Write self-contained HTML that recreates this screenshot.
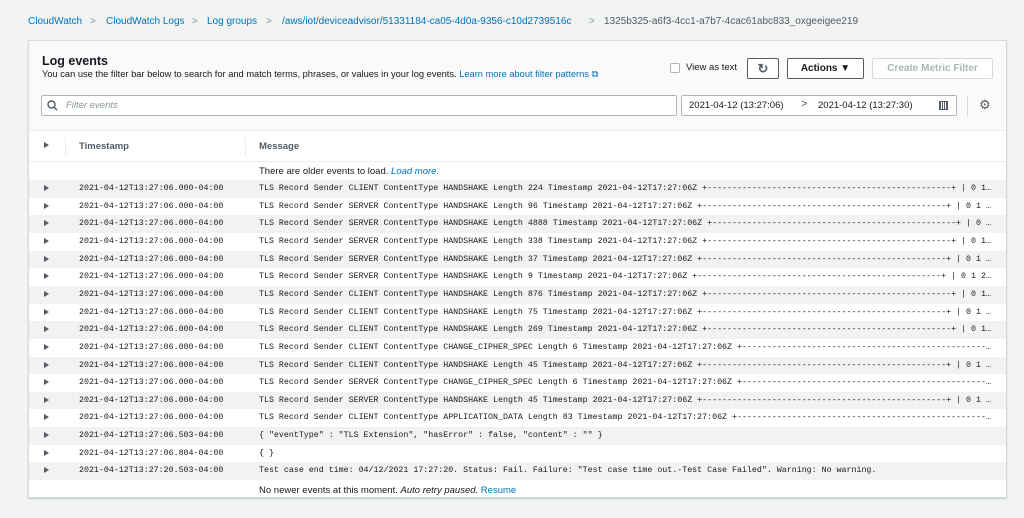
<!DOCTYPE html>
<html><head><meta charset="utf-8"><style>
*{margin:0;padding:0;box-sizing:border-box}
body{width:1024px;height:518px;background:#f2f3f3;font-family:"Liberation Sans",sans-serif;color:#16191f;position:relative;overflow:hidden}
.a{position:absolute;white-space:nowrap}
.bc{top:16px;font-size:10px;color:#0073bb}
.sep{color:#879596}
.panel{left:28px;top:40px;width:979px;height:458px;background:#fff;border:1px solid #d5dbdb;box-shadow:0 1px 1px rgba(0,28,36,.2)}
.btn{border:1px solid #545b64;border-radius:2px;background:#fff;font-size:10px;font-weight:bold;text-align:center;color:#545b64}
.row{position:absolute;left:29px;width:977px;height:17.65px}
.row.g{background:#f2f2f2}
.mono{font-family:"Liberation Mono",monospace;font-size:8.3px;color:#16191f;white-space:nowrap}
.tri{position:absolute;left:15px;top:5px;width:0;height:0;border-left:5px solid #545b64;border-top:3.5px solid transparent;border-bottom:3.5px solid transparent}
.ts{position:absolute;left:50px;top:4px}
.msg{position:absolute;left:230px;top:4px;width:734px;overflow:hidden;text-overflow:ellipsis}
</style></head><body>
<div class="a bc" style="left:28px">CloudWatch</div>
<div class="a bc sep" style="left:90px">&gt;</div>
<div class="a bc" style="left:106px">CloudWatch Logs</div>
<div class="a bc sep" style="left:192px">&gt;</div>
<div class="a bc" style="left:207px">Log groups</div>
<div class="a bc sep" style="left:266px">&gt;</div>
<div class="a bc" style="left:282px">/aws/iot/deviceadvisor/51331184-ca05-4d0a-9356-c10d2739516c</div>
<div class="a bc sep" style="left:589px">&gt;</div>
<div class="a bc" style="left:604px;color:#545b64">1325b325-a6f3-4cc1-a7b7-4cac61abc833_oxgeeigee219</div>
<div class="a panel"></div>
<div class="a" style="left:29px;top:41px;width:977px;height:89px;background:#fafafa"></div>
<div class="a" style="left:42px;top:54px;font-size:12.5px;font-weight:bold">Log events</div>
<div class="a" style="left:42px;top:69px;font-size:9.3px;color:#16191f">You can use the filter bar below to search for and match terms, phrases, or values in your log events. <span style="color:#0073bb">Learn more about filter patterns ⧉</span></div>
<div class="a" style="left:670px;top:63px;width:10px;height:10px;border:1px solid #aab7b8;border-radius:2px;background:#fff"></div>
<div class="a" style="left:686px;top:62px;font-size:9.5px">View as text</div>
<div class="a btn" style="left:747px;top:58px;width:32px;height:21px;font-size:13px;line-height:19px">↻</div>
<div class="a btn" style="left:787px;top:58px;width:77px;height:21px;line-height:19px;color:#16191f">Actions ▼</div>
<div class="a btn" style="left:872px;top:58px;width:121px;height:21px;line-height:19px;border-color:#d5dbdb;color:#aab7b8">Create Metric Filter</div>
<div class="a" style="left:41px;top:95px;width:636px;height:21px;border:1px solid #aab7b8;border-radius:2px;background:#fff"></div>
<svg class="a" style="left:47px;top:100px" width="11" height="11" viewBox="0 0 11 11"><circle cx="4.5" cy="4.5" r="3.5" fill="none" stroke="#545b64" stroke-width="1.4"/><path d="M7 7l3 3" stroke="#545b64" stroke-width="1.5"/></svg>
<div class="a" style="left:66px;top:100px;font-size:9.5px;font-style:italic;color:#879596">Filter events</div>
<div class="a" style="left:681px;top:95px;width:276px;height:21px;border:1px solid #aab7b8;border-radius:2px;background:#fff"></div>
<div class="a" style="left:689px;top:100px;font-size:9.5px">2021-04-12 (13:27:06)</div>
<div class="a" style="left:801px;top:98px;font-size:11px;color:#545b64">&gt;</div>
<div class="a" style="left:818px;top:100px;font-size:9.5px">2021-04-12 (13:27:30)</div>
<div class="a" style="left:939px;top:101px;width:9px;height:9px;border:1.5px solid #545b64;background:repeating-linear-gradient(90deg,#545b64 0 1px,#fff 1px 2px)"></div>
<div class="a" style="left:967px;top:96px;width:1px;height:20px;background:#d5dbdb"></div>
<div class="a" style="left:979px;top:97px;font-size:13px;color:#545b64">⚙</div>
<div class="a" style="left:29px;top:130px;width:977px;height:1px;background:#eaeded"></div>
<div class="a" style="left:29px;top:161px;width:977px;height:1px;background:#eaeded"></div>
<div class="tri" style="left:44px;top:142px"></div>
<div class="a" style="left:65px;top:138px;width:1px;height:18px;background:#eaeded"></div>
<div class="a" style="left:245px;top:138px;width:1px;height:18px;background:#eaeded"></div>
<div class="a" style="left:79px;top:141px;font-size:9.5px;font-weight:bold;color:#545b64">Timestamp</div>
<div class="a" style="left:259px;top:141px;font-size:9.5px;font-weight:bold;color:#545b64">Message</div>
<div class="a" style="left:259px;top:166px;font-size:9.5px">There are older events to load. <i style="color:#0073bb">Load more.</i></div>
<div class="row g" style="top:180.0px"><div class="tri"></div><div class="ts mono">2021-04-12T13:27:06.000-04:00</div><div class="msg mono">TLS Record Sender CLIENT ContentType HANDSHAKE Length 224 Timestamp 2021-04-12T17:27:06Z +-------------------------------------------------+ | 0 1 2 3 4 5 6 7 8 9</div></div>
<div class="row" style="top:197.65px"><div class="tri"></div><div class="ts mono">2021-04-12T13:27:06.000-04:00</div><div class="msg mono">TLS Record Sender SERVER ContentType HANDSHAKE Length 96 Timestamp 2021-04-12T17:27:06Z +-------------------------------------------------+ | 0 1 2 3 4 5 6 7 8 9</div></div>
<div class="row g" style="top:215.3px"><div class="tri"></div><div class="ts mono">2021-04-12T13:27:06.000-04:00</div><div class="msg mono">TLS Record Sender SERVER ContentType HANDSHAKE Length 4888 Timestamp 2021-04-12T17:27:06Z +-------------------------------------------------+ | 0 1 2 3 4 5 6 7 8 9</div></div>
<div class="row" style="top:232.95px"><div class="tri"></div><div class="ts mono">2021-04-12T13:27:06.000-04:00</div><div class="msg mono">TLS Record Sender SERVER ContentType HANDSHAKE Length 338 Timestamp 2021-04-12T17:27:06Z +-------------------------------------------------+ | 0 1 2 3 4 5 6 7 8 9</div></div>
<div class="row g" style="top:250.6px"><div class="tri"></div><div class="ts mono">2021-04-12T13:27:06.000-04:00</div><div class="msg mono">TLS Record Sender SERVER ContentType HANDSHAKE Length 37 Timestamp 2021-04-12T17:27:06Z +-------------------------------------------------+ | 0 1 2 3 4 5 6 7 8 9</div></div>
<div class="row" style="top:268.25px"><div class="tri"></div><div class="ts mono">2021-04-12T13:27:06.000-04:00</div><div class="msg mono">TLS Record Sender SERVER ContentType HANDSHAKE Length 9 Timestamp 2021-04-12T17:27:06Z +-------------------------------------------------+ | 0 1 2 3 4 5 6 7 8 9</div></div>
<div class="row g" style="top:285.9px"><div class="tri"></div><div class="ts mono">2021-04-12T13:27:06.000-04:00</div><div class="msg mono">TLS Record Sender CLIENT ContentType HANDSHAKE Length 876 Timestamp 2021-04-12T17:27:06Z +-------------------------------------------------+ | 0 1 2 3 4 5 6 7 8 9</div></div>
<div class="row" style="top:303.55px"><div class="tri"></div><div class="ts mono">2021-04-12T13:27:06.000-04:00</div><div class="msg mono">TLS Record Sender CLIENT ContentType HANDSHAKE Length 75 Timestamp 2021-04-12T17:27:06Z +-------------------------------------------------+ | 0 1 2 3 4 5 6 7 8 9</div></div>
<div class="row g" style="top:321.2px"><div class="tri"></div><div class="ts mono">2021-04-12T13:27:06.000-04:00</div><div class="msg mono">TLS Record Sender CLIENT ContentType HANDSHAKE Length 269 Timestamp 2021-04-12T17:27:06Z +-------------------------------------------------+ | 0 1 2 3 4 5 6 7 8 9</div></div>
<div class="row" style="top:338.85px"><div class="tri"></div><div class="ts mono">2021-04-12T13:27:06.000-04:00</div><div class="msg mono">TLS Record Sender CLIENT ContentType CHANGE_CIPHER_SPEC Length 6 Timestamp 2021-04-12T17:27:06Z +----------------------------------------------------------------------</div></div>
<div class="row g" style="top:356.5px"><div class="tri"></div><div class="ts mono">2021-04-12T13:27:06.000-04:00</div><div class="msg mono">TLS Record Sender CLIENT ContentType HANDSHAKE Length 45 Timestamp 2021-04-12T17:27:06Z +-------------------------------------------------+ | 0 1 2 3 4 5 6 7 8 9</div></div>
<div class="row" style="top:374.15px"><div class="tri"></div><div class="ts mono">2021-04-12T13:27:06.000-04:00</div><div class="msg mono">TLS Record Sender SERVER ContentType CHANGE_CIPHER_SPEC Length 6 Timestamp 2021-04-12T17:27:06Z +----------------------------------------------------------------------</div></div>
<div class="row g" style="top:391.8px"><div class="tri"></div><div class="ts mono">2021-04-12T13:27:06.000-04:00</div><div class="msg mono">TLS Record Sender SERVER ContentType HANDSHAKE Length 45 Timestamp 2021-04-12T17:27:06Z +-------------------------------------------------+ | 0 1 2 3 4 5 6 7 8 9</div></div>
<div class="row" style="top:409.45px"><div class="tri"></div><div class="ts mono">2021-04-12T13:27:06.000-04:00</div><div class="msg mono">TLS Record Sender CLIENT ContentType APPLICATION_DATA Length 83 Timestamp 2021-04-12T17:27:06Z +-------------------------------------------------------+ |</div></div>
<div class="row g" style="top:427.1px"><div class="tri"></div><div class="ts mono">2021-04-12T13:27:06.503-04:00</div><div class="msg mono">{ "eventType" : "TLS Extension", "hasError" : false, "content" : "" }</div></div>
<div class="row" style="top:444.75px"><div class="tri"></div><div class="ts mono">2021-04-12T13:27:06.804-04:00</div><div class="msg mono">{ }</div></div>
<div class="row g" style="top:462.4px"><div class="tri"></div><div class="ts mono">2021-04-12T13:27:20.503-04:00</div><div class="msg mono">Test case end time: 04/12/2021 17:27:20. Status: Fail. Failure: "Test case time out.-Test Case Failed". Warning: No warning.</div></div>
<div class="a" style="left:259px;top:485px;font-size:9.5px">No newer events at this moment. <i>Auto retry paused.</i> <span style="color:#0073bb">Resume</span></div>
</body></html>
